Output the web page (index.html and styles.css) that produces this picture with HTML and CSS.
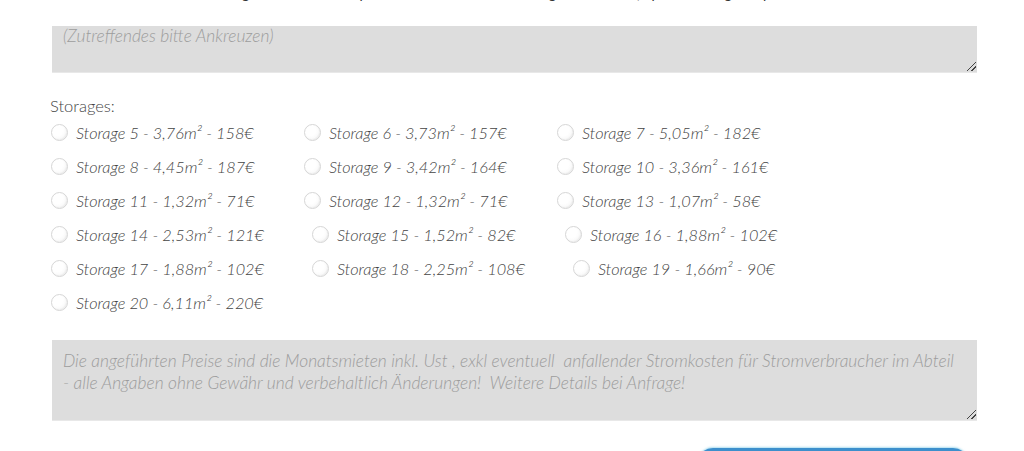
FILE: index.html
```html
<!DOCTYPE html>
<html lang="de">
<head>
<meta charset="utf-8">
<link rel="stylesheet" href="styles.css">
</head>
<body>
<div class="form">
  <div class="topline">Bitte geben Sie hier Ihre persönlichen Wünsche und Fragen an uns ein, optional und gerne per Email</div>
  <div class="textarea small"><span class="ph">(Zutreffendes bitte Ankreuzen)</span><span class="grip"></span></div>
  <div class="label">Storages:</div>
  <div class="radios">
    <div class="row">
      <label class="opt"><span class="radio"></span><span class="txt">Storage 5 - 3,76m² - 158€</span></label>
      <label class="opt"><span class="radio"></span><span class="txt">Storage 6 - 3,73m² - 157€</span></label>
      <label class="opt"><span class="radio"></span><span class="txt">Storage 7 - 5,05m² - 182€</span></label>
    </div>
    <div class="row">
      <label class="opt"><span class="radio"></span><span class="txt">Storage 8 - 4,45m² - 187€</span></label>
      <label class="opt"><span class="radio"></span><span class="txt">Storage 9 - 3,42m² - 164€</span></label>
      <label class="opt"><span class="radio"></span><span class="txt">Storage 10 - 3,36m² - 161€</span></label>
    </div>
    <div class="row">
      <label class="opt"><span class="radio"></span><span class="txt">Storage 11 - 1,32m² - 71€</span></label>
      <label class="opt"><span class="radio"></span><span class="txt">Storage 12 - 1,32m² - 71€</span></label>
      <label class="opt"><span class="radio"></span><span class="txt">Storage 13 - 1,07m² - 58€</span></label>
    </div>
    <div class="row">
      <label class="opt wide"><span class="radio"></span><span class="txt">Storage 14 - 2,53m² - 121€</span></label>
      <label class="opt"><span class="radio"></span><span class="txt">Storage 15 - 1,52m² - 82€</span></label>
      <label class="opt"><span class="radio"></span><span class="txt">Storage 16 - 1,88m² - 102€</span></label>
    </div>
    <div class="row">
      <label class="opt wide"><span class="radio"></span><span class="txt">Storage 17 - 1,88m² - 102€</span></label>
      <label class="opt wide"><span class="radio"></span><span class="txt">Storage 18 - 2,25m² - 108€</span></label>
      <label class="opt"><span class="radio"></span><span class="txt">Storage 19 - 1,66m² - 90€</span></label>
    </div>
    <div class="row">
      <label class="opt"><span class="radio"></span><span class="txt">Storage 20 - 6,11m² - 220€</span></label>
    </div>
  </div>
  <div class="textarea big"><span class="ph">Die angeführten Preise sind die Monatsmieten inkl. Ust , exkl eventuell&nbsp; anfallender Stromkosten für Stromverbraucher im Abteil<br>- alle Angaben ohne Gewähr und verbehaltlich Änderungen!&nbsp; Weitere Details bei Anfrage!</span><span class="grip"></span></div>
  <div class="actions"><span class="button"></span></div>
</div>
</body>
</html>
```
FILE: styles.css
```css
html, body {
  margin: 0;
  padding: 0;
  background: #ffffff;
  overflow: hidden;
}
body {
  width: 1024px;
  height: 451px;
  font-family: Lato, "Open Sans", sans-serif;
  color: #555;
}
.form {
  padding-left: 52px;
  width: 925px;
  height: 451px;
  overflow: hidden;
}
.topline {
  height: 6px;
  margin-top: -16px;
  margin-bottom: 36px;
  font-size: 14px;
  line-height: 20px;
  color: #333;
  text-align: center;
  white-space: nowrap;
}
.textarea {
  position: relative;
  background: #dddddd;
  box-sizing: border-box;
  padding: 0 11px;
  font-style: italic;
  font-size: 17.4px;
  font-weight: 300;
  color: #9c9c9c;
  border-bottom: 1px solid #e8e8e8;
}
.textarea.small {
  height: 47px;
  padding-top: 0;
  line-height: 20px;
}
.textarea.big {
  height: 81px;
  padding-top: 10px;
  line-height: 22px;
}
.grip {
  position: absolute;
  right: 1px;
  bottom: 1px;
  width: 9px;
  height: 9px;
  background:
    linear-gradient(135deg, transparent 45%, #444 45%, #444 55%, transparent 55%, transparent 70%, #444 70%, #444 80%, transparent 80%);
}
.label {
  margin-top: 23px;
  margin-left: -2px;
  font-size: 16.5px;
  font-weight: 300;
  line-height: 20px;
  color: #444;
}
.radios {
  margin-left: -1px;
  margin-top: -1px;
  margin-bottom: 21px;
}
.row {
  display: flex;
  height: 34px;
  align-items: center;
}
.opt {
  display: flex;
  align-items: center;
  width: 253px;
  flex: none;
}
.opt.wide {
  width: 261px;
}
.radio {
  width: 15px;
  height: 15px;
  border-radius: 50%;
  border: 1px solid #d6d6d6;
  background: radial-gradient(circle at 35% 35%, #ffffff 40%, #f2f2f2 100%);
  box-shadow: inset -1px -1px 1px rgba(0,0,0,0.04);
  flex: none;
}
.txt {
  margin-left: 8px;
  font-style: italic;
  font-size: 16.3px;
  font-weight: 300;
  color: #444;
  white-space: nowrap;
}
.actions {
  display: flex;
  justify-content: flex-end;
  padding-right: 8px;
  margin-top: 27px;
}
.button {
  width: 272px;
  height: 40px;
  border-radius: 16px;
  background: #3d8fcc;
  box-shadow: 0 -1px 2px rgba(120, 200, 230, 0.6);
}
```
